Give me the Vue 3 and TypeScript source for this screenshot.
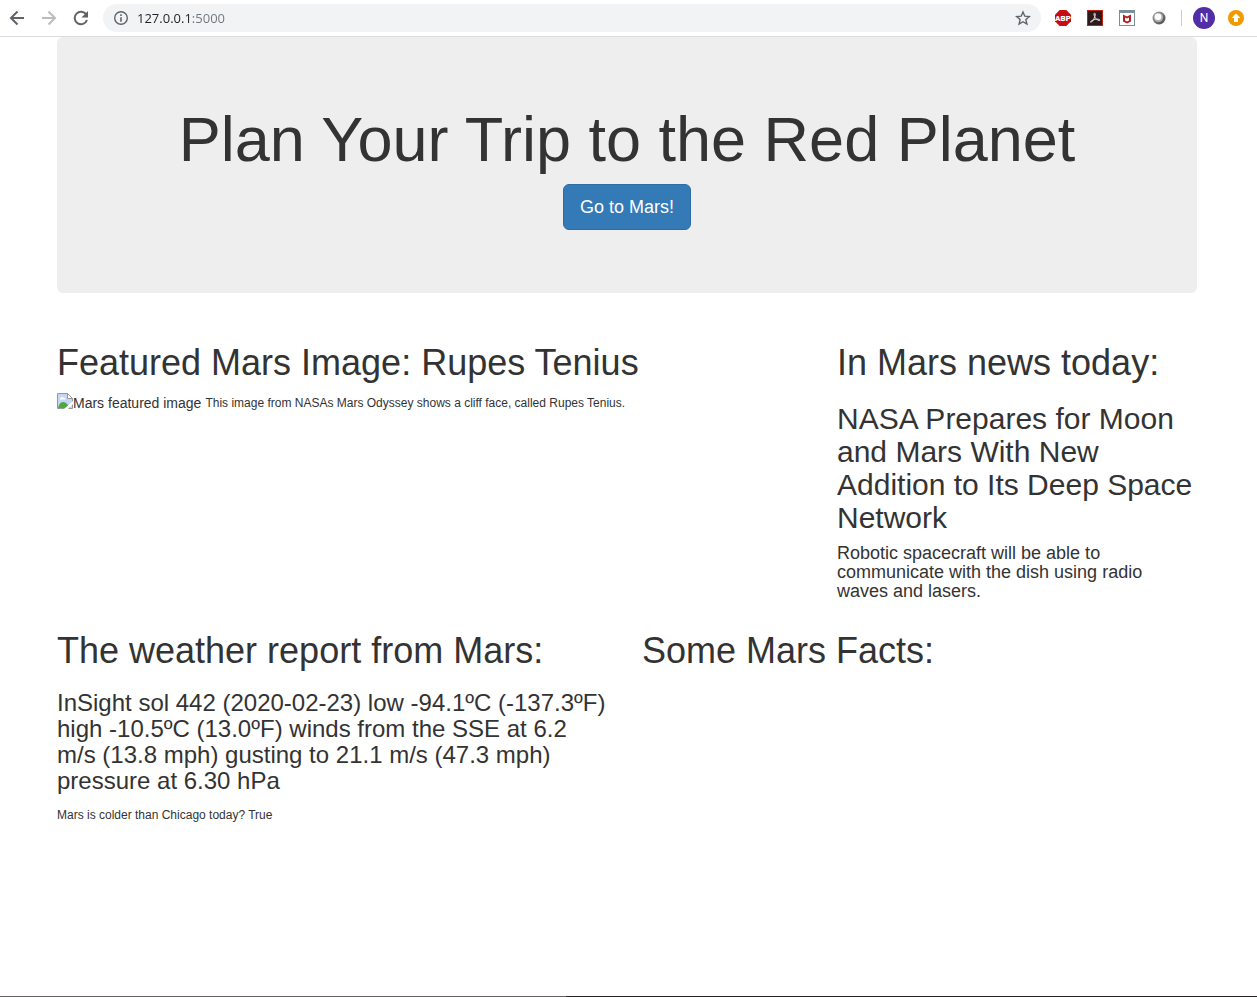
<script setup lang="ts">
import { ref } from 'vue'

const address = ref('127.0.0.1:5000')

const news = {
  title: 'NASA Prepares for Moon and Mars With New Addition to Its Deep Space Network',
  teaser: 'Robotic spacecraft will be able to communicate with the dish using radio waves and lasers.',
}

const weather =
  'InSight sol 442 (2020-02-23) low -94.1ºC (-137.3ºF) high -10.5ºC (13.0ºF) winds from the SSE at 6.2 m/s (13.8 mph) gusting to 21.1 m/s (47.3 mph) pressure at 6.30 hPa'
</script>

<template>
  <div class="window">
    <header class="toolbar">
      <nav class="nav">
        <button class="tool" type="button" aria-label="Back">
          <svg width="16" height="16" viewBox="0 0 16 16" fill="none" stroke="#5f6368" stroke-width="2"><path d="M15 8H2.500M8.500 1.500L2 8l6.500 6.500" /></svg>
        </button>
        <button class="tool" type="button" aria-label="Forward">
          <svg width="16" height="16" viewBox="0 0 16 16" fill="none" stroke="#babcbe" stroke-width="2"><path d="M1 8h12.500M7.500 1.500L14 8l-6.500 6.500" /></svg>
        </button>
        <button class="tool" type="button" aria-label="Reload">
          <svg width="16" height="16" viewBox="0 0 16 16"><path d="M13.300 4.500A6.300 6.300 0 1 0 14 10" fill="none" stroke="#5f6368" stroke-width="2" /><path d="M15 1v6.500H8.500z" fill="#5f6368" /></svg>
        </button>
      </nav>
      <div class="address">
        <svg width="16" height="16" viewBox="0 0 16 16"><circle cx="8" cy="8" r="6.300" fill="none" stroke="#5f6368" stroke-width="1.400" /><path d="M7.200 4.300h1.600v1.600H7.200zM7.200 7.200h1.600v4.500H7.200z" fill="#5f6368" /></svg>
        <input v-model="address" class="url" type="text" aria-label="Address" spellcheck="false" />
        <button class="tool" type="button" aria-label="Bookmark this page">
          <svg width="16" height="16" viewBox="0 0 16 16"><path d="M8 2l1.800 4.200 4.500.4-3.400 3 1 4.400L8 11.700 4.100 14l1-4.400-3.400-3 4.500-.4z" fill="none" stroke="#5f6368" stroke-width="1.400" /></svg>
        </button>
      </div>
      <div class="extensions">
        <button class="tool" type="button" aria-label="Adblock Plus">
          <svg width="16" height="16" viewBox="0 0 16 16"><path d="M4.700 0h6.600L16 4.700v6.600L11.300 16H4.700L0 11.300V4.700z" fill="#c70d12" /><text x="8" y="11" text-anchor="middle" class="abp">ABP</text></svg>
        </button>
        <button class="tool" type="button" aria-label="Adobe Acrobat">
          <svg width="16" height="16" viewBox="0 0 16 16"><rect x=".5" y=".5" width="15" height="15" fill="#2d1a1c" stroke="#c5200d" /><path d="M7.300 3.200c1.400-.4 1.200 2.300-.1 4.900-1 2.100-2.500 4.500-3.500 4.200-1-.6 1.700-2.500 5-3 2.600-.4 4.500.1 4.100 1-.5.8-3-.5-4.400-2.300C7.100 6.200 6.600 3.600 7.300 3.200z" fill="none" stroke="#e8e0df" /></svg>
        </button>
        <button class="tool" type="button" aria-label="McAfee WebAdvisor">
          <svg width="16" height="16" viewBox="0 0 16 16"><rect x=".5" y=".5" width="15" height="15" fill="#fff" stroke="#78909c" /><path d="M0 0h16v3H0z" fill="#78909c" /><path d="M4 4.500l4 2 4-2v7L8 13.500l-4-2z" fill="#b71c25" /><path d="M6 7.500l2 1 2-1v3L8 11.500 6 10.500z" fill="#fff" /></svg>
        </button>
        <button class="tool" type="button" aria-label="Extension">
          <svg width="16" height="16" viewBox="0 0 16 16"><defs><linearGradient id="ring" x1="0" y1="0" x2="1" y2="1"><stop offset="0" stop-color="#aaa" /><stop offset="1" stop-color="#444" /></linearGradient></defs><circle cx="8" cy="8" r="6.500" fill="url(#ring)" /><circle cx="7.500" cy="7.500" r="4.500" fill="#b5b5b5" /><circle cx="7" cy="6.800" r="3.300" fill="#fff" /></svg>
        </button>
        <span class="divider"></span>
        <button class="profile" type="button" aria-label="Profile N">N</button>
        <button class="tool" type="button" aria-label="Update">
          <svg width="16" height="16" viewBox="0 0 16 16"><circle cx="8" cy="8" r="8" fill="#f29900" /><path d="M8 3.500L3.500 8H6v4h4V8h2.500z" fill="#fff" /></svg>
        </button>
      </div>
    </header>

    <div class="viewport">
      <main class="page">
        <section class="jumbotron">
          <h1>Plan Your Trip to the Red Planet</h1>
          <button class="go" type="button">Go to Mars!</button>
        </section>

        <div class="row wide-left">
          <section>
            <h1>Featured Mars Image: Rupes Tenius</h1>
            <div class="featured">
              <svg width="16" height="16" viewBox="0 0 16 16"><path d="M.5.5h10l5 5v10H.5z" fill="#c6d7f5" stroke="#999" /><path d="M1 15l1-3c2-4 6-4 9 0l2 3z" fill="#4fa83d" /><path d="M3 6c0-2 3-3 4-1 2-.5 2 1.500 1 1.500H3z" fill="#fff" /><path d="M10.500.5v5h5z" fill="#fff" stroke="#999" /><path d="M7 16l9-8v3l-5 5z" fill="#fff" /></svg><span>Mars featured image</span>
              <small>This image from NASAs Mars Odyssey shows a cliff face, called Rupes Tenius.</small>
            </div>
          </section>
          <section>
            <h1>In Mars news today:</h1>
            <h2>{{ news.title }}</h2>
            <h4>{{ news.teaser }}</h4>
          </section>
        </div>

        <div class="row halves">
          <section>
            <h1>The weather report from Mars:</h1>
            <h3>{{ weather }}</h3>
            <small>Mars is colder than Chicago today? True</small>
          </section>
          <section>
            <h1>Some Mars Facts:</h1>
          </section>
        </div>
      </main>
    </div>
    <div class="edge"></div>
  </div>
</template>

<style>
body {
  margin: 0;
  background: #fff;
}
</style>

<style scoped>
* {
  box-sizing: border-box;
}

.window {
  display: flex;
  flex-direction: column;
  min-height: 100vh;
  font: 14px/20px "Liberation Sans", Arial, sans-serif;
  color: #333;
}

button {
  border: 0;
  padding: 0;
  background: none;
  cursor: pointer;
}

svg {
  display: block;
}

.toolbar {
  display: flex;
  align-items: center;
  height: 37px;
  padding: 0 13px 1px 9px;
  border-bottom: 1px solid #dadce0;
}

.nav {
  display: flex;
  gap: 16px;
  margin-right: 14px;
}

.address {
  display: flex;
  flex: 1;
  align-items: center;
  gap: 8px;
  height: 28px;
  padding: 0 10px;
  border-radius: 14px;
  background: #f1f3f4;
}

.url {
  flex: 1;
  min-width: 0;
  height: 20px;
  padding: 0;
  border: 0;
  outline: 0;
  font: 13px/20px "Open Sans", sans-serif;
  color: transparent;
  caret-color: #202124;
  background: linear-gradient(to right, #202124 54px, #70757a 54px) text;
}

.extensions {
  display: flex;
  align-items: center;
  gap: 16px;
  margin-left: 14px;
}

.abp {
  font: 900 8px Roboto, sans-serif;
  fill: #fff;
}

.divider {
  width: 1px;
  height: 16px;
  margin: 0 -5px 0 -2px;
  background: #ccc;
}

.profile {
  width: 22px;
  height: 22px;
  margin-right: -3px;
  border-radius: 50%;
  background: #512da8;
  color: #fff;
  font: 12px/22px Roboto, sans-serif;
}

.viewport {
  flex: 1;
  padding-right: 3px;
}

.page {
  max-width: 1170px;
  margin: 0 auto;
  padding: 0 15px;
}

h1,
h2,
h3,
h4 {
  margin: 20px 0 10px;
  font-weight: 500;
}

h1 {
  font-size: 36px;
  line-height: 39px;
}

h2 {
  font-size: 30px;
  line-height: 33px;
}

h3 {
  font-size: 24px;
  line-height: 26px;
}

h4 {
  margin-top: 10px;
  font-size: 18px;
  line-height: 19px;
}

small {
  font-size: 12px;
}

.jumbotron {
  display: flex;
  flex-direction: column;
  align-items: center;
  margin-bottom: 30px;
  padding: 48px 60px 63px;
  border-radius: 6px;
  background: #eee;
}

.jumbotron h1 {
  font-size: 63px;
  line-height: 69px;
  text-align: center;
}

.go {
  padding: 10px 16px;
  border: 1px solid #2e6da4;
  border-radius: 6px;
  background: #337ab7;
  color: #fff;
  font: 18px/24px "Liberation Sans", Arial, sans-serif;
}

.row {
  display: grid;
  column-gap: 30px;
}

.wide-left {
  grid-template-columns: minmax(0, 750fr) minmax(0, 360fr);
}

.halves {
  grid-template-columns: minmax(0, 1fr) minmax(0, 1fr);
}

.featured {
  display: flex;
  align-items: flex-start;
  padding-top: 1px;
}

.featured small {
  margin-left: 4px;
}

.edge {
  height: 1px;
  background: linear-gradient(to right, #666364 45%, #282425 45%);
}
</style>
